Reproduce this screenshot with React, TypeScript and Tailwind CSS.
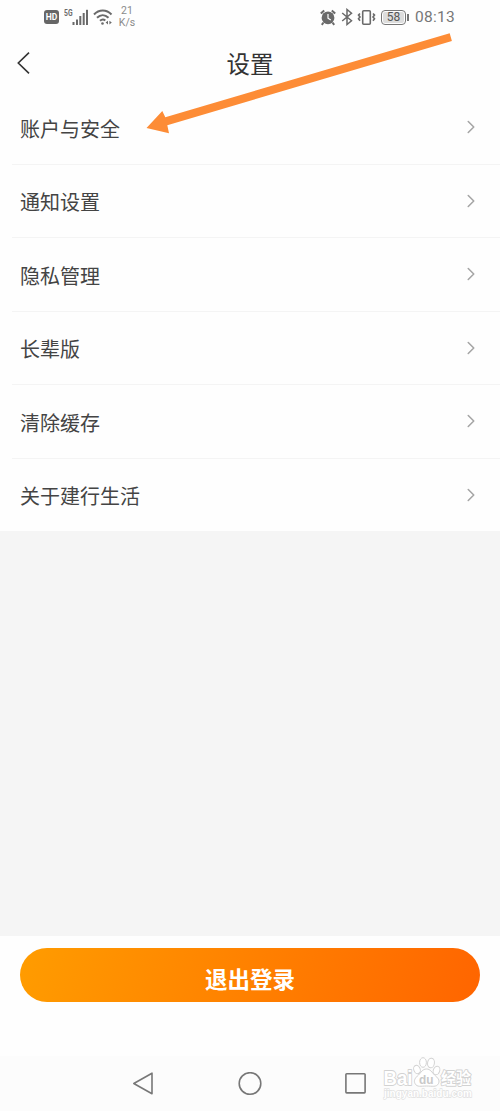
import React from 'react';
import { ChevronRight } from 'lucide-react';

const MENU_ITEMS = ['账户与安全', '通知设置', '隐私管理', '长辈版', '清除缓存', '关于建行生活'];

const StatusBar: React.FC = () => (
  <div className="h-[34px] shrink-0 flex items-center justify-between px-[44px] text-[#6a6a6a]">
    <div className="flex items-center">
      <span className="w-[15px] h-[14px] rounded-[3px] bg-[#666] text-white text-[8.5px] font-bold leading-[14px] text-center">HD</span>
      <svg className="ml-[5px]" width="25" height="20" viewBox="0 0 25 20" fill="currentColor">
        <text x="0" y="8.500" fontSize="8.500" fontWeight="700" textLength="8.500" lengthAdjust="spacingAndGlyphs">5G</text>
        <rect x="8.500" y="15" width="2" height="3" />
        <rect x="12" y="12.500" width="2" height="5.500" />
        <rect x="15.300" y="9" width="2" height="9" />
        <rect x="18.700" y="6" width="2" height="12" />
        <rect x="22" y="2.800" width="2" height="15.200" />
      </svg>
      <svg className="ml-[4px]" width="20" height="18" viewBox="0 0 20 18" fill="none" stroke="currentColor" strokeWidth="2">
        <path d="M1 6.500C6 1.200 13.500 1.200 18.500 6.500" />
        <path d="M4 9.800C7.500 6.300 12 6.300 15.500 9.800" />
        <path d="M7 12.800C9 11 10.500 11 12.300 12.500" />
        <circle cx="9.500" cy="15.500" r="1.300" fill="currentColor" stroke="none" />
        <path d="M15 12.800l-2.400 1.800 2.400 1.800zM16.400 12.800l2.400 1.800-2.400 1.800z" fill="currentColor" stroke="none" />
      </svg>
      <div className="ml-[4px] w-[20px] text-center text-[10.5px] leading-[12px] text-[#8a8a8a]">
        <div>21</div>
        <div>K/s</div>
      </div>
    </div>
    <div className="flex items-center">
      <svg width="16" height="17" viewBox="0 0 16 17" fill="none" stroke="currentColor" strokeWidth="2">
        <circle cx="8" cy="8.800" r="6.400" fill="currentColor" stroke="none" />
        <path d="M0.800 4.500L4.200 1.500M15.200 4.500L11.800 1.500M3.500 13.500L1.800 15.800M12.500 13.500l1.700 2.300" />
        <path d="M8 5v4.200l2.800 1.700" stroke="white" strokeWidth="1.200" />
      </svg>
      <svg className="ml-[5px]" width="12" height="18" viewBox="0 0 12 18" fill="none" stroke="currentColor" strokeWidth="1.500">
        <path d="M1.200 5l9.300 7.800L6 16.500v-15l4.500 3.700-9.300 7.800" />
      </svg>
      <svg className="ml-[4px]" width="19" height="17" viewBox="0 0 19 17" fill="none" stroke="currentColor" strokeWidth="1.600">
        <rect x="5.700" y="1.700" width="7.600" height="13.600" rx="1" />
        <path d="M3 4.500l-1.500 1.600L3 8 1.500 9.800 3 11.800M16 4.500l1.500 1.600L16 8l1.500 1.800-1.500 2" />
      </svg>
      <div className="ml-[5px] w-[25px] h-[15px] rounded-[4px] border-[1.5px] border-[#777] p-px">
        <div className="h-full rounded-[2px] bg-[#ddd] text-[12px] leading-[11px] text-center text-[#555]">58</div>
      </div>
      <span className="ml-[1px] w-[2px] h-[7px] bg-[#777]" />
      <span className="ml-[6px] w-[41px] text-[15.5px] leading-[18px] tracking-[0.3px] whitespace-nowrap text-[#777]">08:13</span>
    </div>
  </div>
);

const Watermark: React.FC = () => (
  <svg
    className="absolute left-[380px] top-0 font-['Liberation_Sans','Noto_Sans_CJK_SC',sans-serif]"
    width="100" height="48" viewBox="0 0 100 48" fill="white" stroke="#d2d2d2" strokeWidth="1"
  >
    <g fontWeight="700" strokeWidth="1.800" strokeLinejoin="round" paintOrder="stroke">
      <text x="3.500" y="29" fontSize="20" textLength="29" lengthAdjust="spacingAndGlyphs">Bai</text>
      <text x="61" y="27.500" fontSize="15.500" textLength="30" lengthAdjust="spacingAndGlyphs">经验</text>
    </g>
    <ellipse cx="37" cy="13.500" rx="3.200" ry="4.300" transform="rotate(-20 37 13.500)" />
    <ellipse cx="43" cy="6.500" rx="3.400" ry="4.800" />
    <ellipse cx="51" cy="7" rx="3.400" ry="4.800" transform="rotate(8 51 7)" />
    <ellipse cx="56.500" cy="14.500" rx="3.200" ry="4.400" transform="rotate(20 56.500 14.500)" />
    <path d="M46.500 13c-4 0-5.500 3.500-8 6-3.500 3-5 5.500-3.500 8.500 2 4 6 2.500 11.500 2.500s10 1.500 12-2.500c1.500-3.500-.5-5.500-4-8.500-2.500-2.500-4-6-8-6z" />
    <text x="39" y="27.500" fontSize="13" fontWeight="700" fill="#c9c9c9" stroke="none" textLength="14.500" lengthAdjust="spacingAndGlyphs">du</text>
    <text x="4" y="41" fontSize="10.500" fontWeight="700" strokeWidth="1.300" stroke="#e0e0e0" paintOrder="stroke" textLength="88" lengthAdjust="spacingAndGlyphs">jingyan.baidu.com</text>
  </svg>
);

const App: React.FC = () => {
  return (
    <div className="relative w-[500px] h-[1111px] overflow-hidden flex flex-col bg-[#fefefe] font-['Roboto','Noto_Sans_CJK_SC',sans-serif] text-[#444]">
      <StatusBar />

      <header className="h-[57px] shrink-0 grid grid-cols-3 items-center">
        <button className="pl-[17px]">
          <svg width="14" height="24" viewBox="0 0 14 24" fill="none" stroke="#333" strokeWidth="1.600"><path d="M12 1.700L1.300 12 12 22.300" /></svg>
        </button>
        <h1 className="pt-[4px] text-center text-[23.5px] leading-[34px] text-[#333]">设置</h1>
      </header>

      <div className="h-[440px] shrink-0 flex flex-col">
        {MENU_ITEMS.map((item, i) => (
          <div key={item} className="h-[73.5px] shrink-0 pl-3">
            <div className={`h-full pl-2 pr-[18px] flex items-center justify-between border-b ${i < MENU_ITEMS.length - 1 ? 'border-[#f4f4f4]' : 'border-transparent'}`}>
              <span className="pt-[5px] text-[20px] leading-[30px]">{item}</span>
              <ChevronRight size={22} strokeWidth={1.7} className="text-[#a5a5a5]" />
            </div>
          </div>
        ))}
      </div>

      <div className="h-[405px] shrink-0 bg-[#f5f5f5]" />

      <div className="h-[120px] shrink-0 px-5 pt-[12px]">
        <button className="w-full h-[54px] pt-[10px] rounded-full bg-linear-[105deg] from-[#ff9c00] to-[#ff6500] text-white text-[22.5px] leading-[44px] font-bold">退出登录</button>
      </div>

      <nav className="relative flex-1 flex items-center justify-center gap-[82px] bg-[#fcfcfc] text-[#777]">
        <svg width="24" height="24" viewBox="0 0 24 24" fill="none" stroke="currentColor" strokeWidth="1.600" strokeLinejoin="round"><path d="M1.800 11.500L20 1.200v20.600z" /></svg>
        <svg width="24" height="24" viewBox="0 0 24 24" fill="none" stroke="currentColor" strokeWidth="1.600"><circle cx="12" cy="11.500" r="10.800" /></svg>
        <svg width="24" height="24" viewBox="0 0 24 24" fill="none" stroke="currentColor" strokeWidth="1.600"><rect x="1.900" y="1.700" width="19.200" height="19.200" rx="0.800" /></svg>
        <Watermark />
      </nav>

      {/* pointer to the first row */}
      <svg className="absolute left-[140px] top-[28px] pointer-events-none" width="320" height="112" viewBox="140 28 320 112">
        <path d="M146.500 128L162.300 111l3 6.300L449.700 33.300l2.200 7.700L167.300 125.300l1.700 8z" fill="#fd8c36" />
      </svg>
    </div>
  );
};

export default App;
